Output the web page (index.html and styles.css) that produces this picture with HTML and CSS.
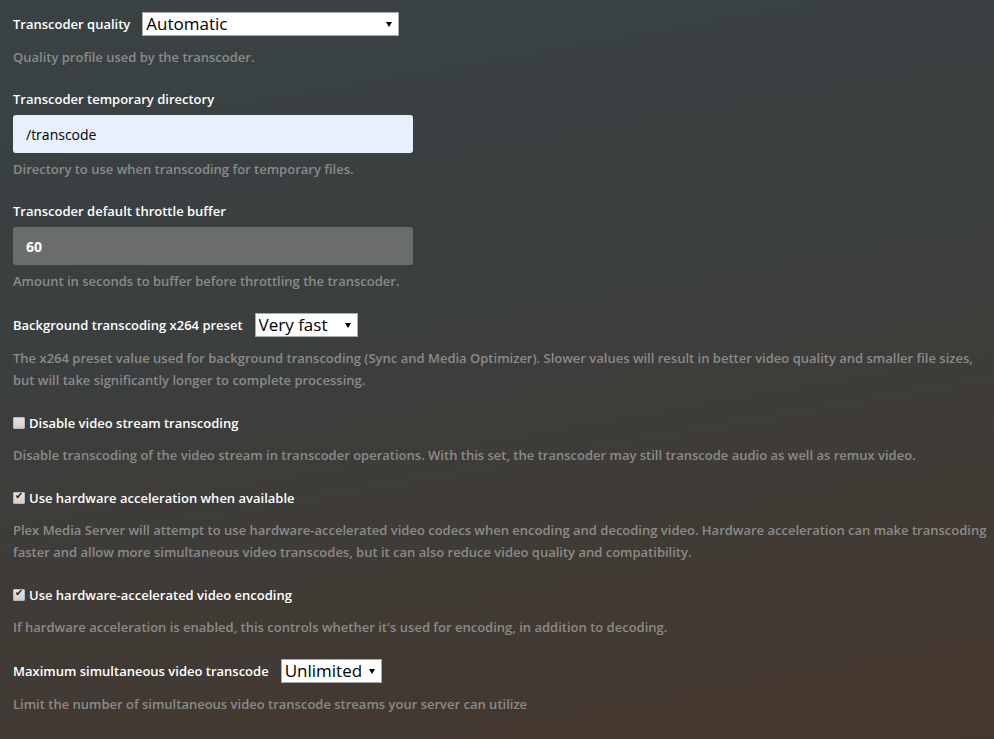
FILE: index.html
```html
<!DOCTYPE html>
<html lang="en">
  <head>
    <meta charset="UTF-8" />
    <meta name="viewport" content="width=device-width, initial-scale=1.0" />
    <title>Settings - Transcoder</title>
    <link rel="stylesheet" href="styles.css">
  </head>
  <body>
    <form class="settings">
      <div class="form-group">
        <div class="inline-row">
          <label for="quality">Transcoder quality</label>
          <div class="select-wrap wide">
            <select id="quality">
              <option>Automatic</option>
            </select>
          </div>
        </div>
        <p class="help">Quality profile used by the transcoder.</p>
      </div>

      <div class="form-group">
        <label class="block-label" for="tempdir">Transcoder temporary directory</label>
        <input class="text-input autofill" id="tempdir" type="text" value="/transcode">
        <p class="help">Directory to use when transcoding for temporary files.</p>
      </div>

      <div class="form-group">
        <label class="block-label" for="throttle">Transcoder default throttle buffer</label>
        <input class="text-input dark" id="throttle" type="text" value="60">
        <p class="help">Amount in seconds to buffer before throttling the transcoder.</p>
      </div>

      <div class="form-group">
        <div class="inline-row">
          <label for="preset">Background transcoding x264 preset</label>
          <div class="select-wrap">
            <select id="preset" class="preset">
              <option>Very fast</option>
            </select>
          </div>
        </div>
        <p class="help">The x264 preset value used for background transcoding (Sync and Media Optimizer). Slower values will result in better video quality and smaller file sizes, but will take significantly longer to complete processing.</p>
      </div>

      <div class="form-group">
        <label class="check-row">
          <input type="checkbox">
          <span>Disable video stream transcoding</span>
        </label>
        <p class="help">Disable transcoding of the video stream in transcoder operations. With this set, the transcoder may still transcode audio as well as remux video.</p>
      </div>

      <div class="form-group">
        <label class="check-row">
          <input type="checkbox" checked>
          <span>Use hardware acceleration when available</span>
        </label>
        <p class="help">Plex Media Server will attempt to use hardware-accelerated video codecs when encoding and decoding video. Hardware acceleration can make transcoding faster and allow more simultaneous video transcodes, but it can also reduce video quality and compatibility.</p>
      </div>

      <div class="form-group">
        <label class="check-row">
          <input type="checkbox" checked>
          <span>Use hardware-accelerated video encoding</span>
        </label>
        <p class="help">If hardware acceleration is enabled, this controls whether it's used for encoding, in addition to decoding.</p>
      </div>

      <div class="form-group">
        <div class="inline-row">
          <label for="maxtrans">Maximum simultaneous video transcode</label>
          <div class="select-wrap">
            <select id="maxtrans" class="limit">
              <option>Unlimited</option>
            </select>
          </div>
        </div>
        <p class="help">Limit the number of simultaneous video transcode streams your server can utilize</p>
      </div>
    </form>
  </body>
</html>
```

FILE: styles.css
```css
html {
  min-height: 100%;
  background: linear-gradient(170deg, #394244 0%, #3b3f3f 40%, #413a34 75%, #46372d 100%);
}
body {
  font-family: "Open Sans", "Liberation Sans", sans-serif;
  margin: 0;
  padding: 12px 4px 0 13px;
  color: #fff;
  min-height: 727px;
}
.settings {
  max-width: 977px;
}
.form-group {
  margin-bottom: 21px;
}
label {
  font-size: 13px;
  font-weight: 600;
  line-height: 20px;
  color: #fff;
}
.block-label {
  display: block;
  margin-bottom: 6px;
}
.inline-row {
  display: flex;
  align-items: center;
  gap: 12px;
  height: 24px;
}
.select-wrap {
  position: relative;
  height: 24px;
}
.select-wrap::after {
  content: "";
  position: absolute;
  right: 7px;
  top: 10px;
  border-left: 3px solid transparent;
  border-right: 3px solid transparent;
  border-top: 5px solid #000;
  pointer-events: none;
}
select {
  appearance: none;
  -webkit-appearance: none;
  height: 24px;
  margin: 0;
  padding: 0 20px 0 3px;
  border: 1px solid #a9a9a9;
  border-radius: 0;
  background: #fff;
  color: #000;
  font-family: "Open Sans", "Liberation Sans", sans-serif;
  font-size: 17px;
  line-height: 22px;
}
.wide select {
  width: 257px;
}
select.preset {
  width: 103px;
}
select.limit {
  width: 101px;
}
.text-input {
  display: block;
  box-sizing: border-box;
  width: 400px;
  height: 38px;
  margin: 0;
  padding: 0 13px;
  border: none;
  border-radius: 3px;
  font-family: "Open Sans", "Liberation Sans", sans-serif;
  font-size: 14px;
}
.text-input + .help {
  margin-top: 5px;
}
.autofill {
  background: #e8f0fe;
  color: #000;
}
.dark {
  background: #6a6d6b;
  color: #fff;
  font-weight: 700;
}
.help {
  margin: 10px 0 0;
  font-size: 13px;
  font-weight: 600;
  line-height: 22px;
  color: #8a8b89;
}
.check-row {
  display: flex;
  align-items: center;
  gap: 4px;
  height: 22px;
}
.check-row input {
  appearance: none;
  -webkit-appearance: none;
  position: relative;
  width: 12px;
  height: 12px;
  margin: 0;
  border: 1px solid #b8b8b8;
  border-radius: 1px;
  background: linear-gradient(#e4e4e4, #cfcfcf);
}
.check-row input:checked::after {
  content: "✔";
  position: absolute;
  left: 1px;
  top: -3px;
  font-size: 10px;
  color: #222;
}
```
